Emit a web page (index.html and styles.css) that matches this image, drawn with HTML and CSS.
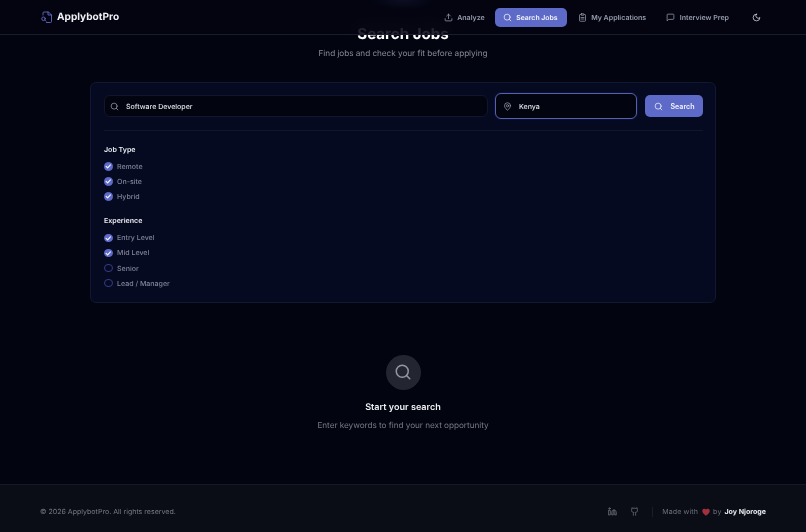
FILE: index.html
```html
<!DOCTYPE html>
<html lang="en">
<head>
<meta charset="utf-8">
<title>ApplybotPro</title>
<link rel="stylesheet" href="styles.css">
</head>
<body>
<div class="page">
  <header class="topbar">
    <div class="brand">
      <svg class="brand-icon" viewBox="0 0 24 24" fill="none" stroke="currentColor" stroke-width="1.6" stroke-linecap="round" stroke-linejoin="round"><path d="M4 8V4a2 2 0 0 1 2-2h9l6 6v13a2 2 0 0 1-2 2h-8"/><path d="M14 2v6h7"/><circle cx="5" cy="15.500" r="3.500"/><path d="M8 18.500l2 2"/></svg>
      <span>ApplybotPro</span>
    </div>
    <nav class="nav">
      <a class="nav-item"><svg viewBox="0 0 24 24" class="ico"><path d="M21 15v4a2 2 0 0 1-2 2H5a2 2 0 0 1-2-2v-4"/><path d="M17 8l-5-5-5 5"/><path d="M12 3v12"/></svg>Analyze</a>
      <a class="nav-item active"><svg viewBox="0 0 24 24" class="ico"><circle cx="11" cy="11" r="8"/><path d="M21 21l-4.300-4.300"/></svg>Search Jobs</a>
      <a class="nav-item apps"><svg viewBox="0 0 24 24" class="ico"><rect x="8" y="2" width="8" height="4" rx="1"/><path d="M16 4h2a2 2 0 0 1 2 2v14a2 2 0 0 1-2 2H6a2 2 0 0 1-2-2V6a2 2 0 0 1 2-2h2"/><path d="M8 12h8M8 16h8"/></svg>My Applications</a>
      <a class="nav-item"><svg viewBox="0 0 24 24" class="ico"><path d="M21 15a2 2 0 0 1-2 2H7l-4 4V5a2 2 0 0 1 2-2h14a2 2 0 0 1 2 2z"/></svg>Interview Prep</a>
      <button class="theme"><svg viewBox="0 0 24 24" class="ico moon"><path d="M12 3a6 6 0 0 0 9 9 9 9 0 1 1-9-9z"/></svg></button>
    </nav>
  </header>

  <main class="main">
    <h1 class="title">Search Jobs</h1>
    <p class="subtitle">Find jobs and check your fit before applying</p>

    <section class="card">
      <div class="search-row">
        <div class="field grow"><svg viewBox="0 0 24 24" class="ico"><circle cx="11" cy="11" r="8"/><path d="M21 21l-4.300-4.300"/></svg><span>Software Developer</span></div>
        <div class="field location"><svg viewBox="0 0 24 24" class="ico"><path d="M20 10c0 6-8 12-8 12s-8-6-8-12a8 8 0 0 1 16 0z"/><circle cx="12" cy="10" r="3"/></svg><span>Kenya</span></div>
        <button class="search-btn"><svg viewBox="0 0 24 24" class="ico"><circle cx="11" cy="11" r="8"/><path d="M21 21l-4.300-4.300"/></svg>Search</button>
      </div>
      <div class="filters">
        <div class="group">
          <h3>Job Type</h3>
          <div class="opt"><span class="check on"><svg viewBox="0 0 12 12"><path d="M3 6.200l2.100 2.100L9 4"/></svg></span>Remote</div>
          <div class="opt"><span class="check on"><svg viewBox="0 0 12 12"><path d="M3 6.200l2.100 2.100L9 4"/></svg></span>On-site</div>
          <div class="opt"><span class="check on"><svg viewBox="0 0 12 12"><path d="M3 6.200l2.100 2.100L9 4"/></svg></span>Hybrid</div>
        </div>
        <div class="group">
          <h3>Experience</h3>
          <div class="opt"><span class="check on"><svg viewBox="0 0 12 12"><path d="M3 6.200l2.100 2.100L9 4"/></svg></span>Entry Level</div>
          <div class="opt"><span class="check on"><svg viewBox="0 0 12 12"><path d="M3 6.200l2.100 2.100L9 4"/></svg></span>Mid Level</div>
          <div class="opt"><span class="check"></span>Senior</div>
          <div class="opt"><span class="check"></span>Lead / Manager</div>
        </div>
      </div>
    </section>

    <section class="empty">
      <div class="empty-circle"><svg viewBox="0 0 24 24" class="ico"><circle cx="11" cy="11" r="8"/><path d="M21 21l-4.300-4.300"/></svg></div>
      <h2>Start your search</h2>
      <p>Enter keywords to find your next opportunity</p>
    </section>
  </main>

  <footer class="footer">
    <span>© 2026 ApplybotPro. All rights reserved.</span>
    <div class="foot-right">
      <svg viewBox="0 0 24 24" class="ico"><path d="M16 8a6 6 0 0 1 6 6v7h-4v-7a2 2 0 0 0-4 0v7h-4v-7a6 6 0 0 1 6-6z"/><rect x="2" y="9" width="4" height="12"/><circle cx="4" cy="4" r="2"/></svg>
      <svg viewBox="0 0 24 24" class="ico"><path d="M15 22v-4a4.800 4.800 0 0 0-1-3.500c3 0 6-2 6-5.500.1-1.300-.4-2.500-1-3.500.3-1.100.3-2.300 0-3.500 0 0-1 0-3 1.500-2.600-.5-5.400-.5-8 0C6 2 5 2 5 2c-.3 1.200-.3 2.400 0 3.500-.7 1-1.100 2.200-1 3.500 0 3.500 3 5.500 6 5.500-.4.500-.7 1.100-.8 1.700-.2.600-.2 1.200-.2 1.800v4"/></svg>
      <span class="sep"></span>
      <span class="made">Made with <svg class="heart" viewBox="0 0 24 24"><path d="M12 21s-9-5.600-9-12a5 5 0 0 1 9-3 5 5 0 0 1 9 3c0 6.400-9 12-9 12z"/></svg> by <b>Joy Njoroge</b></span>
    </div>
  </footer>
</div>
</body>
</html>
```
FILE: styles.css
```css
* { box-sizing: border-box; }
html, body { margin: 0; height: 100%; }
body { background: #02040f; color: #fff; font-family: Inter, "Liberation Sans", sans-serif; text-rendering: geometricPrecision; overflow: hidden; }
.page { position: relative; width: 806px; height: 532px; display: flex; flex-direction: column; overflow: hidden; filter: blur(.3px); }
.ico { width: 9px; height: 9px; fill: none; stroke: currentColor; stroke-width: 2; stroke-linecap: round; stroke-linejoin: round; flex: none; }

.topbar { position: absolute; top: 0; left: 0; right: 0; height: 35px; display: flex; align-items: center; justify-content: space-between; padding: 0 40px; background: radial-gradient(ellipse 32px 10px at 50% 0, rgba(45,50,100,.22), transparent), rgba(3,5,17,.88); backdrop-filter: blur(10px); border-bottom: 1px solid #1a1d2b; z-index: 2; }
.brand { display: flex; align-items: center; gap: 4px; font-size: 10.1px; font-weight: 700; color: #f0f1f6; }
.brand-icon { width: 12px; height: 12px; margin-left: 1px; color: #7077d6; }
.nav { display: flex; align-items: center; gap: 1px; font-size: 7.05px; font-weight: 600; color: #989cac; }
.nav-item { display: flex; align-items: center; gap: 4.5px; height: 19px; padding: 0 9px; border-radius: 5px; }
.nav-item.active { padding: 0 9px 0 8px; margin-right: 1px; background: #5e6ac8; color: #f4f5fd; font-size: 6.9px; }
.nav-item.apps { padding-right: 10px; }
.theme { display: flex; background: none; border: 0; color: #dcdee5; padding: 0; margin: 0 5px 0 13px; }

.main { flex: 1; display: flex; flex-direction: column; padding: 24px 90px 0; align-items: stretch; }
.title { margin: 0; text-align: center; font-size: 15.1px; line-height: 19px; font-weight: 700; color: #fff; }
.subtitle { margin: 4px 0 0; text-align: center; font-size: 8.2px; line-height: 12px; letter-spacing: -.03px; color: #888b99; }

.card { margin-top: 23px; height: 221px; padding: 10px 12px 13px 13px; background: #050a20; border: 1px solid #121733; border-radius: 6px; }
.search-row { display: flex; align-items: center; gap: 7px; padding-bottom: 11px; border-bottom: 1px solid #12162c; }
.field { display: flex; align-items: center; gap: 7px; height: 22px; padding: 0 5px; background: #02040f; border: 1px solid #12162c; border-radius: 6px; font-size: 7.05px; font-weight: 500; color: #e2e4ea; }
.field .ico { color: #989cac; }
.grow { flex: 1; }
.location { width: 142px; height: 26px; padding: 0 7px; border: 1px solid #5560b0; box-shadow: 0 0 0 1px #0c1030; }
.search-btn { display: flex; align-items: center; justify-content: center; gap: 8px; width: 58px; height: 22px; margin-left: 1px; background: #5e6ac8; border: 0; border-radius: 5px; color: #f2f3fc; font: 600 7.05px Inter, "Liberation Sans", sans-serif; }

.filters { display: flex; flex-direction: column; gap: 10.9px; padding-top: 12.5px; }
.group h3 { margin: 0 0 4.3px; font-size: 7.05px; line-height: 11px; font-weight: 600; color: #eceef3; }
.opt { display: flex; align-items: center; gap: 4.500px; height: 15.100px; font-size: 7.05px; font-weight: 500; color: #80849a; }
.check { width: 8.500px; height: 8.500px; border-radius: 50%; border: 1px solid #343b8a; display: flex; align-items: center; justify-content: center; }
.check.on { background: #5e6ac8; border-color: #5e6ac8; }
.check svg { width: 8.500px; height: 8.500px; fill: none; stroke: #f4f5fd; stroke-width: 1.700; stroke-linecap: round; stroke-linejoin: round; flex: none; }

.empty { margin-top: 51.5px; display: flex; flex-direction: column; align-items: center; }
.empty-circle { width: 35px; height: 35px; border-radius: 50%; background: #232530; display: flex; align-items: center; justify-content: center; color: #95979f; }
.empty-circle .ico { width: 18px; height: 18px; }
.empty h2 { margin: 12px 0 0; font-size: 9.07px; line-height: 12px; font-weight: 600; color: #f0f1f5; }
.empty p { margin: 5px 0 0; font-size: 8.2px; line-height: 12px; letter-spacing: -.03px; color: #777a85; }

.footer { height: 48px; display: flex; align-items: center; justify-content: space-between; padding: 6px 40px 0; background: #0a0d16; border-top: 1px solid #171a25; font-size: 7.05px; color: #787b86; }
.foot-right { display: flex; align-items: center; }
.foot-right > .ico { margin-right: 13px; color: #747884; }
.sep { width: 1px; height: 10px; background: #1a1d28; margin: 0 9px 0 0; }
.made { display: flex; align-items: center; gap: 3px; letter-spacing: .02em; color: #6c707c; }
.made b { font-weight: 700; letter-spacing: 0; color: #eaebf0; }
.heart { width: 10px; height: 10px; fill: #a3303f; margin: 0 -1px 0 0; }
```
